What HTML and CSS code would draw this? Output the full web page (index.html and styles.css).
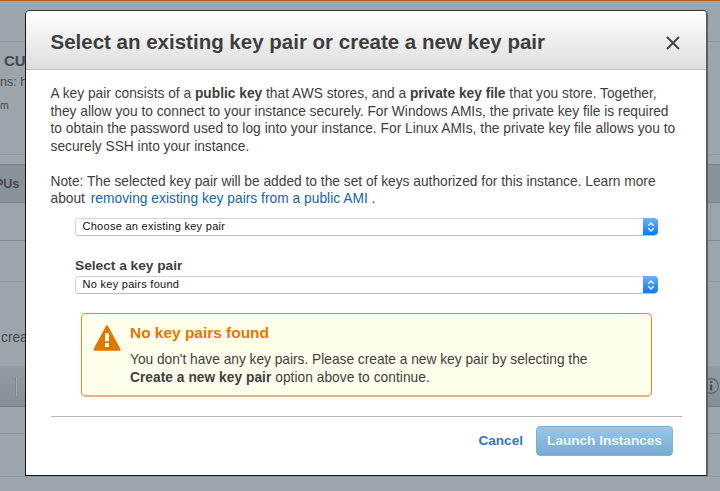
FILE: index.html
```html
<!DOCTYPE html>
<html lang="en">
<head>
<meta charset="utf-8">
<title>Select an existing key pair</title>
<link rel="stylesheet" href="styles.css">
</head>
<body>
<div class="page">
  <div class="spacer"></div>
  <div class="summary">
    <div class="cpu">CU</div>
    <div class="hint">ns: h</div>
    <div class="note">m</div>
  </div>
  <div class="gap"></div>
  <div class="table-head">PUs</div>
  <div class="table-row"><span class="tick"></span></div>
  <div class="table-row second"></div>
  <div class="create">crea</div>
  <div class="group-head">
    <span class="separator"></span>
    <svg class="info" viewBox="0 0 18 18"><circle cx="9" cy="9" r="7.4"/><path d="M9.2 7.4v6.2M9.2 4v2"/></svg>
  </div>
  <div class="group-row"></div>
  <div class="group-row tall"></div>
</div>

<div class="modal">
  <div class="modal-head">
    <h1>Select an existing key pair or create a new key pair</h1>
    <svg class="close" viewBox="0 0 14 14"><path d="M1 1l12 12M13 1L1 13"/></svg>
  </div>
  <div class="modal-body">
    <p>A key pair consists of a <b>public key</b> that AWS stores, and a <b>private key file</b> that you store. Together,<br>they allow you to connect to your instance securely. For Windows AMIs, the private key file is required<br><span class="wide">to obtain the password used to log into your instance. For Linux AMIs, the private key file allows you to</span><br>securely SSH into your instance.</p>
    <p>Note: The selected key pair will be added to the set of keys authorized for this instance. Learn more<br>about <a class="link">removing existing key pairs from a public AMI</a> .</p>
    <div class="fields">
      <div class="select"><span>Choose an existing key pair</span><i><svg viewBox="0 0 8 10"><path d="M1.3 3.7L4 1l2.7 2.7M1.3 6.3L4 9l2.7-2.7"/></svg></i></div>
      <div class="label">Select a key pair</div>
      <div class="select"><span>No key pairs found</span><i><svg viewBox="0 0 8 10"><path d="M1.3 3.7L4 1l2.7 2.7M1.3 6.3L4 9l2.7-2.7"/></svg></i></div>
    </div>
    <div class="alert">
      <svg class="warn" viewBox="0 0 28 27"><path class="tri" d="M14 1.6L26.4 24.6H1.6z"/><path class="mark" d="M12 8.2h4v8h-4zM12 18h4v4h-4z"/></svg>
      <div>
        <h2>No key pairs found</h2>
        <div class="alert-text">You don't have any key pairs. Please create a new key pair by selecting the<br><span class="wide"><b>Create a new key pair</b> option above to continue.</span></div>
      </div>
    </div>
    <div class="actions">
      <a class="cancel">Cancel</a>
      <div class="launch">Launch Instances</div>
    </div>
  </div>
</div>
</body>
</html>
```
FILE: styles.css
```css
* { box-sizing: border-box; }
body {
  margin: 0;
  width: 720px;
  height: 491px;
  overflow: hidden;
  font-family: "Liberation Sans", Arial, sans-serif;
  background: #9da5ac;
  color: #3e3e3e;
}
.page { color: #464b51; white-space: nowrap; }
.spacer { height: 42px; border-top: 1px solid #a4652c; border-bottom: 1px solid #90989f; }
.summary { height: 113px; border-bottom: 1px solid #90989f; padding-top: 9px; }
.cpu { font-size: 15px; font-weight: bold; line-height: 20px; padding-left: 4px; }
.hint { font-size: 12.5px; line-height: 20px; padding-top: 1px; }
.note { font-size: 10.5px; line-height: 20px; padding-top: 3px; }
.gap { height: 9px; }
.table-head {
  height: 39px;
  background: #8a9299;
  border-top: 1px solid #7d858d;
  border-bottom: 1px solid #7d858d;
  font-size: 12.5px;
  font-weight: bold;
  line-height: 38px;
  text-indent: -5px;
}
.table-row { height: 38px; border-bottom: 1px solid #7d858d; display: flex; justify-content: flex-end; }
.tick { width: 10px; border-left: 1px solid #8a9299; }
.table-row.second { height: 41px; border-bottom-color: #90989f; }
.create { height: 84px; font-size: 13.75px; line-height: 20px; padding: 46px 0 0 1px; }
.group-head {
  height: 41px;
  background: linear-gradient(#949ca3, #868e95);
  border-bottom: 1px solid #747c83;
  display: flex;
  justify-content: space-between;
  align-items: center;
  padding: 0 0 0 15px;
}
.separator { width: 2px; height: 19px; border-left: 1px solid #7d858d; border-right: 1px solid #a1a9b0; }
.info { width: 18px; height: 18px; fill: none; stroke: #5a6167; stroke-width: 1.1; }
.info path { stroke: #464b51; stroke-width: 2.2; }
.group-row { height: 27px; border-bottom: 1px solid #8c949b; }
.group-row.tall { height: 43px; }

.modal {
  position: absolute;
  left: 25px;
  top: 10px;
  width: 683px;
  height: 466px;
  background: #fff;
  border: 1px solid #171717;
  border-right: 2px solid #5b5d60;
  border-top-color: #333;
  border-radius: 5px 5px 0 0;
  overflow: hidden;
}
.modal-head {
  height: 59px;
  background: linear-gradient(#fff, #dedede);
  border-bottom: 1px solid #c2c2c2;
  padding: 2px 26px 0 24.5px;
  display: flex;
  align-items: center;
  justify-content: space-between;
}
h1 { margin: 0; font-size: 20.5px; line-height: 24px; white-space: nowrap; padding-top: 2px; }
.close { width: 14px; height: 14px; margin-top: 4px; fill: none; stroke: #444; stroke-width: 2; }
.modal-body { padding: 15px 24.5px 0; font-size: 13.76px; line-height: 17.5px; white-space: nowrap; }
p { margin: 0 0 17.5px; }
.wide { letter-spacing: 0.025px; }
.link { color: #1763ad; margin-left: 2px; letter-spacing: 0.025px; }
p:nth-of-type(2) { margin-bottom: 10.5px; }
.fields { width: 583px; margin-left: 24.5px; }
.select {
  height: 17.5px;
  border: 1px solid #d2d2d2;
  border-bottom: 1px solid #bdbdbd;
  border-radius: 4px;
  color: #111;
  font-size: 11px;
  letter-spacing: 0.28px;
  line-height: 15px;
  display: flex;
  justify-content: space-between;
  padding-left: 6.5px;
}
.select i {
  width: 15px;
  height: 17px;
  margin: -1px -1px 0 0;
  border-radius: 0 4px 4px 0;
  background: linear-gradient(#6bb3fa, #0f75fb);
  display: flex;
  align-items: center;
  justify-content: center;
}
.select svg { width: 8px; height: 10px; fill: none; stroke: #fff; stroke-width: 1.3; }
.label { font-weight: bold; font-size: 13.7px; padding: 21.5px 0 1.5px; }
.alert {
  width: 571px;
  height: 84px;
  margin: 19.5px 0 0 30px;
  border: 1px solid #e18a2c;
  border-bottom: 2px solid #eeb070;
  border-radius: 5px;
  background: #fffdeb;
  display: flex;
  padding: 11px 0 0 11.5px;
  gap: 9px;
}
.warn { width: 28px; height: 27px; }
.tri { fill: #e07700; stroke: #e07700; stroke-width: 2.4; stroke-linejoin: round; }
.mark { fill: #fffdeb; }
h2 { margin: -1px 0 9px; color: #e07700; font-size: 15.45px; line-height: 18px; }
.alert-text { font-size: 13.72px; line-height: 17.5px; }
.alert-text .wide { letter-spacing: 0.05px; }
.actions {
  margin-top: 19px;
  border-top: 1px solid #b7b7b7;
  display: flex;
  justify-content: flex-end;
  align-items: center;
  gap: 13px;
  padding: 9px 8.5px 0 0;
  font-weight: bold;
  font-size: 13.6px;
}
.cancel { color: #2f74d0; }
.launch {
  width: 137px;
  height: 30px;
  border: 1px solid #7fb0d2;
  border-radius: 4px;
  background: linear-gradient(#98c8ec, #76aad0);
  color: #edf6fc;
  line-height: 28px;
  text-align: center;
}
```
